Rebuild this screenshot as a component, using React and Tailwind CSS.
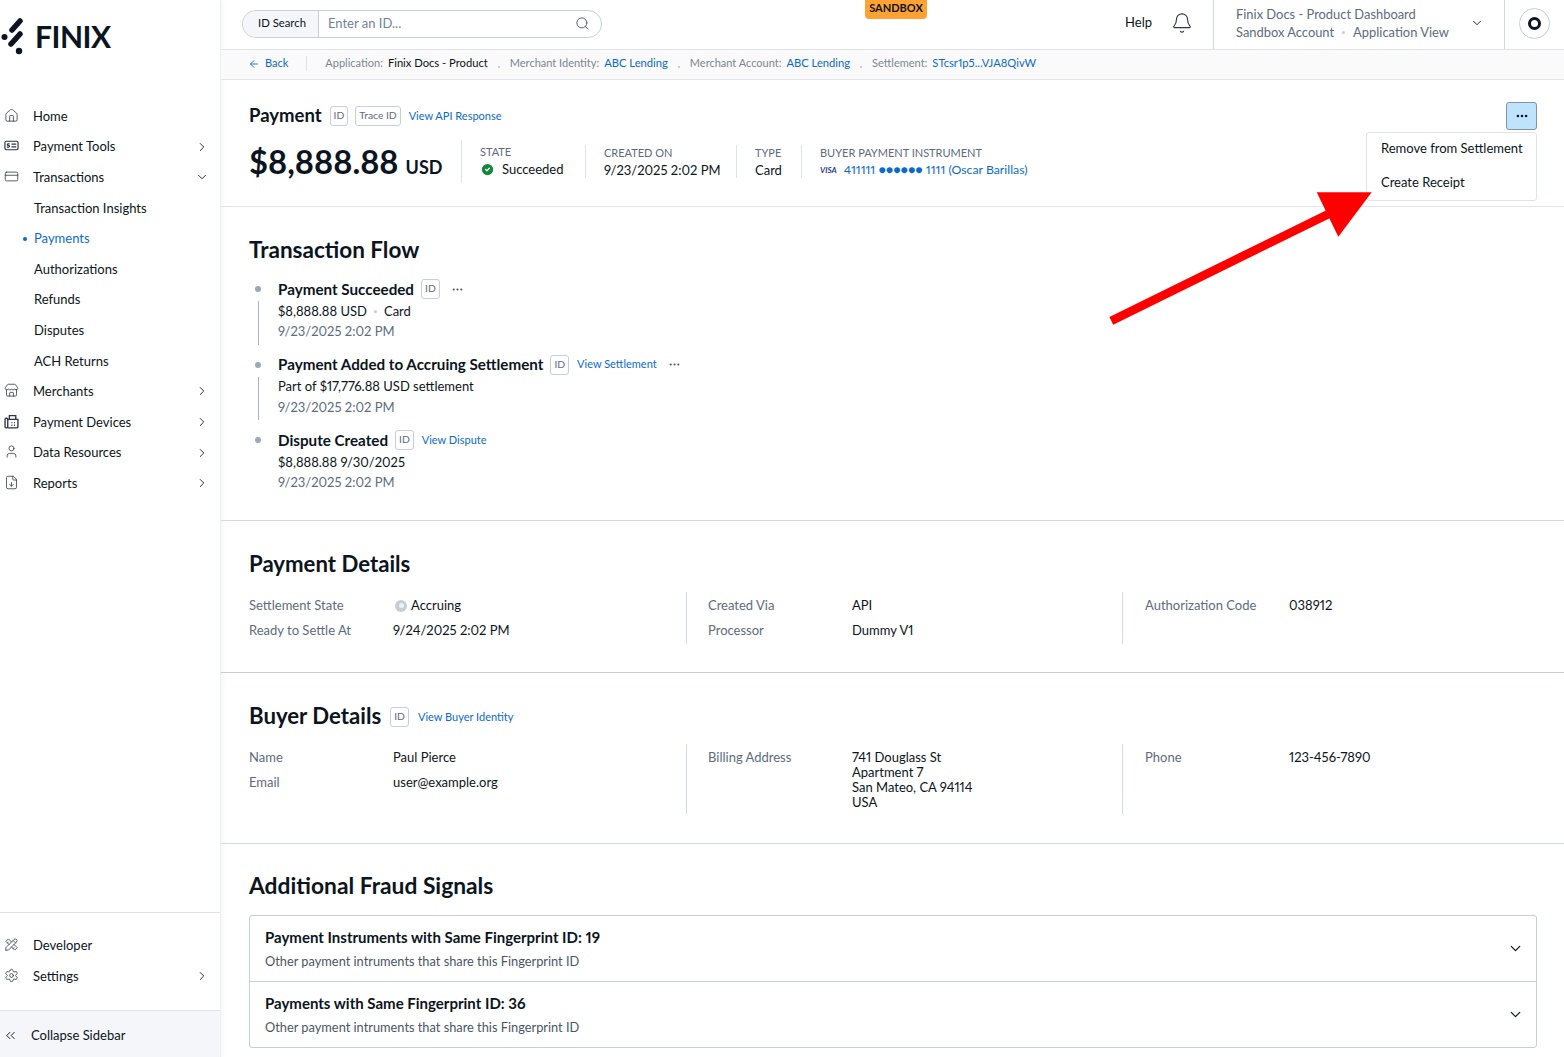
import {
  ArrowLeft,
  Bell,
  CheckCircle2,
  ChevronDown,
  ChevronRight,
  ChevronsLeft,
  CreditCard,
  Ellipsis,
  FileDown,
  House,
  Search,
  Settings,
  Store,
  User,
} from "lucide-react";
import { TbTools } from "react-icons/tb";

const link = "text-[#0b6bcb]";

function ToolsIcon(props) {
  return (
    <svg viewBox="0 0 16 12" fill="none" stroke="currentColor" strokeWidth="0.9" {...props}>
      <rect x="1" y="1.5" width="14" height="9" rx="1.5" />
      <path d="M8 4.5h5M8 7.5h5M6 4.3H4.2a.9.9 0 0 0 0 1.7h.8a.9.9 0 0 1 0 1.8H3" />
    </svg>
  );
}

function DeviceIcon(props) {
  return (
    <svg viewBox="0 0 14 14" fill="none" stroke="currentColor" strokeWidth="0.9" {...props}>
      <rect x="1" y="4" width="2.5" height="9" rx="1" />
      <path d="M3.5 5H13v7a1 1 0 0 1-1 1H3.5M5 5V1.5h6V5" />
      <path d="M7 8h.8M9.5 8h.8M7 10.5h.8M9.5 10.5h.8" />
    </svg>
  );
}

function NavItem({ icon: Icon, label, open, arrow }) {
  return (
    <div className="flex h-[30.6px] items-center pl-[4px] pr-[11px]">
      <Icon className="mb-[3px] h-[15px] w-[15px] shrink-0 text-[#2c3644]" strokeWidth={1.25} />
      <span className="ml-[14px] flex-1">{label}</span>
      {open ? (
        <ChevronDown className="mb-[1px] h-[14px] w-[14px]" strokeWidth={1.5} />
      ) : arrow ? (
        <ChevronRight className="mb-[1px] h-[14px] w-[14px]" strokeWidth={1.5} />
      ) : null}
    </div>
  );
}

function SubItem({ label, active }) {
  return (
    <div className={`relative flex h-[30.6px] items-center pl-[34px] ${active ? link : ""}`}>
      {active && <span className="absolute left-[23px] h-[4px] w-[4px] rounded-full bg-[#0b6bcb]" />}
      {label}
    </div>
  );
}

function Sidebar() {
  return (
    <aside className="flex h-full w-[221px] shrink-0 flex-col border-r border-[#eef0f3] text-[13px] text-[#0b1420] shadow-[2px_0_4px_rgba(0,0,0,0.04)]">
      <div className="flex h-[101.3px] shrink-0 items-start pl-0 pt-[17px]">
        <svg viewBox="0 0 24 40" className="h-[40px] w-[24px]" fill="none" stroke="#0b1420" strokeLinecap="round">
          <path d="M20 4 12 13" strokeWidth="5.5" />
          <path d="M20 17 11 27" strokeWidth="5.5" />
          <circle cx="4.5" cy="20" r="3" fill="#0b1420" stroke="none" />
          <circle cx="19" cy="34" r="3.2" fill="#0b1420" stroke="none" />
        </svg>
        <span className="ml-[11px] text-[30px] font-bold leading-[38px] tracking-[-0.5px] text-[#0b1420]">FINIX</span>
      </div>
      <nav>
        <NavItem icon={House} label="Home" />
        <NavItem icon={ToolsIcon} label="Payment Tools" arrow />
        <NavItem icon={CreditCard} label="Transactions" open />
        <SubItem label="Transaction Insights" />
        <SubItem label="Payments" active />
        <SubItem label="Authorizations" />
        <SubItem label="Refunds" />
        <SubItem label="Disputes" />
        <SubItem label="ACH Returns" />
        <NavItem icon={Store} label="Merchants" arrow />
        <NavItem icon={DeviceIcon} label="Payment Devices" arrow />
        <NavItem icon={User} label="Data Resources" arrow />
        <NavItem icon={FileDown} label="Reports" arrow />
      </nav>
      <div className="mt-auto border-t border-[#dfe3e8] py-[18px]">
        <NavItem icon={TbTools} label="Developer" />
        <NavItem icon={Settings} label="Settings" arrow />
      </div>
      <div className="flex h-[47px] shrink-0 items-center border-t border-[#dfe3e8] bg-[#f4f6f9] pl-[3px] pt-[3px]">
        <ChevronsLeft className="h-[15px] w-[15px]" strokeWidth={1.5} />
        <span className="ml-[13px]">Collapse Sidebar</span>
      </div>
    </aside>
  );
}

function TopBar() {
  return (
    <header className="relative flex h-[50px] shrink-0 items-center border-b border-[#e0e4ea] pl-[21px] text-[13px]">
      <div className="mb-[2px] flex h-[28px] w-[360px] overflow-hidden rounded-full border border-[#c5ced9]">
        <div className="flex w-[76px] items-center justify-center border-r border-[#c5ced9] bg-[#f4f6f9] pl-[3px] text-[11.3px] text-[#0b1420]">
          ID Search
        </div>
        <div className="flex flex-1 items-center justify-between pl-[9px] pr-[11px] text-[#73829a]">
          Enter an ID...
          <Search className="h-[15px] w-[15px] text-[#4a5666]" strokeWidth={1.5} />
        </div>
      </div>
      <div className="absolute left-[644px] top-0 flex h-[19px] w-[62px] items-center justify-center rounded-b-[4px] bg-[#ffa233] pb-[3px] text-[11px] font-bold text-[#0b1420]">
        SANDBOX
      </div>
      <span className="mb-[3px] ml-auto text-[#0b1420]">Help</span>
      <Bell className="mb-[3px] ml-[19px] h-[22px] w-[22px] text-[#2c3644]" strokeWidth={1.25} />
      <div className="ml-[20px] flex h-full w-[292px] items-center border-x border-[#d3d9e1] pb-[3px] pl-[22px] pr-[20px]">
        <div className="flex-1 text-[12.9px] leading-[18px] text-[#5d6b7e]">
          <div>Finix Docs - Product Dashboard</div>
          <div className="flex items-center">
            Sandbox Account
            <span className="mx-[8px] h-[3px] w-[3px] rounded-full bg-[#c5ced9]" />
            Application View
          </div>
        </div>
        <ChevronDown className="h-[14px] w-[14px] text-[#0b1420]" strokeWidth={1.5} />
      </div>
      <div className="mb-[2px] flex w-[59px] justify-center">
        <div className="flex h-[31px] w-[31px] items-center justify-center rounded-full border border-[#c5ced9]">
          <span className="h-[13px] w-[13px] rounded-full border-[3px] border-[#0b1420]" />
        </div>
      </div>
    </header>
  );
}

function Crumb({ label, value, blue }) {
  return (
    <span className="flex items-center gap-[5px]">
      <span className="text-[#7b8694]">{label}</span>
      <span className={`text-[11.2px] ${blue ? link : "text-[#0b1420]"}`}>{value}</span>
    </span>
  );
}

const dot = <span className="mx-[10px] mt-[7px] h-[2px] w-[2px] bg-[#c5ced9]" />;

function Breadcrumbs() {
  return (
    <div className="flex h-[30px] shrink-0 items-center border-b border-[#e0e4ea] bg-[#fafafa] pb-[2px] pl-[27px] text-[11px]">
      <span className={`flex items-center gap-[5px] ${link}`}>
        <ArrowLeft className="h-[12px] w-[12px]" strokeWidth={1.75} />
        Back
      </span>
      <span className="ml-[18px] mr-[18px] h-[15px] w-px bg-[#dfe3e8]" />
      <Crumb label="Application:" value="Finix Docs - Product" />
      {dot}
      <Crumb label="Merchant Identity:" value="ABC Lending" blue />
      {dot}
      <Crumb label="Merchant Account:" value="ABC Lending" blue />
      {dot}
      <Crumb label="Settlement:" value="STcsr1p5...VJA8QivW" blue />
    </div>
  );
}

function IdTag({ children = "ID" }) {
  return (
    <span className="flex h-[20px] items-center rounded-[3px] border border-[#c5ced9] px-[3px] text-[10.3px] text-[#5d6b7e]">
      {children}
    </span>
  );
}

function Stat({ label, children, className = "" }) {
  return (
    <div className={`h-[33px] border-l border-[#dfe3e8] pl-[18px] ${className}`}>
      <div className="text-[11px] leading-[15px] text-[#5d6b7e]">{label}</div>
      <div className="mt-[2px] flex items-center text-[13px] leading-[16px] text-[#0b1420]">{children}</div>
    </div>
  );
}

function PaymentHeader() {
  return (
    <section className="relative h-[127px] shrink-0 border-b border-[#e0e4ea] pl-[28px] pt-[25px]">
      <div className="flex h-[22px] items-center">
        <h1 className="text-[18.5px] font-bold text-[#0b1420]">Payment</h1>
        <span className="ml-[8px]"><IdTag /></span>
        <span className="ml-[7px]"><IdTag>Trace ID</IdTag></span>
        <span className={`ml-[8px] text-[11px] ${link}`}>View API Response</span>
      </div>
      <div className="mt-[13px] flex items-center">
        <div className="flex w-[212px] items-baseline text-[#0b1420]">
          <span className="text-[32.6px] font-bold leading-[40px]">$8,888.88</span>
          <span className="ml-[7px] text-[18px] font-bold">USD</span>
        </div>
        <Stat label="STATE" className="h-[43px] w-[124px] pl-[17px] pt-[4px]">
          <CheckCircle2 className="mr-[7px] h-[15px] w-[15px] fill-[#12883c] text-white" strokeWidth={2} />
          Succeeded
        </Stat>
        <Stat label="CREATED ON" className="w-[151px]">9/23/2025 2:02 PM</Stat>
        <Stat label="TYPE" className="w-[65px]">Card</Stat>
        <Stat label="BUYER PAYMENT INSTRUMENT">
          <span className="mr-[7px] text-[8px] font-bold italic text-[#2a3f8f]">VISA</span>
          <span className={`text-[12.3px] ${link}`}>411111 ●●●●●● 1111 (Oscar Barillas)</span>
        </Stat>
      </div>
      <button className="absolute right-[27px] top-[22px] flex h-[28px] w-[31px] items-center justify-center rounded-[3px] border border-[#7f93ab] bg-[#bfe3fb]">
        <Ellipsis className="h-[14px] w-[14px] text-[#0b1420]" strokeWidth={2.5} />
      </button>
    </section>
  );
}

function FlowItem({ title, children, date, last, tail }) {
  return (
    <div className="relative h-[75.5px] pl-[29px]">
      <span className="absolute left-[6px] top-[7px] h-[6px] w-[6px] rounded-full bg-[#9aa8b8]" />
      {!last && <span className="absolute bottom-[10px] left-[8.5px] top-[22px] w-px bg-[#a9b4c1]" />}
      <div className="flex h-[20px] items-center">
        <span className="text-[15.2px] font-bold text-[#0b1420]">{title}</span>
        <span className="ml-[7px]"><IdTag /></span>
        {tail}
      </div>
      <div className="mt-[4px] flex h-[17px] items-center text-[13px] text-[#0b1420]">{children}</div>
      <div className="mt-[3px] h-[17px] text-[13px] leading-[17px] text-[#5d6b7e]">{date}</div>
    </div>
  );
}

function TransactionFlow() {
  const more = <Ellipsis className="ml-[11px] h-[13px] w-[13px] text-[#4a5666]" strokeWidth={2} />;
  return (
    <section className="h-[314px] shrink-0 border-b border-[#d3d9e1] pl-[28px] pt-[29px]">
      <h2 className="text-[22.5px] font-bold leading-[27px] text-[#0b1420]">Transaction Flow</h2>
      <div className="mt-[16px]">
        <FlowItem title="Payment Succeeded" date="9/23/2025 2:02 PM" tail={more}>
          $8,888.88 USD
          <span className="mx-[7px] h-[3px] w-[3px] rounded-full bg-[#c5ced9]" />
          Card
        </FlowItem>
        <FlowItem
          title="Payment Added to Accruing Settlement"
          date="9/23/2025 2:02 PM"
          tail={
            <>
              <span className={`ml-[8px] text-[11px] ${link}`}>View Settlement</span>
              {more}
            </>
          }
        >
          Part of $17,776.88 USD settlement
        </FlowItem>
        <FlowItem
          title="Dispute Created"
          date="9/23/2025 2:02 PM"
          last
          tail={<span className={`ml-[8px] text-[11px] ${link}`}>View Dispute</span>}
        >
          $8,888.88 9/30/2025
        </FlowItem>
      </div>
    </section>
  );
}

function Field({ label, children }) {
  return (
    <div className="grid min-h-[25px] grid-cols-[144px_1fr] text-[13px] leading-[15px]">
      <span className="text-[#5d6b7e]">{label}</span>
      <div className="text-[#0b1420]">{children}</div>
    </div>
  );
}

function Columns({ children, className = "" }) {
  return <div className={`mt-[15px] grid grid-cols-[437px_436px_1fr] ${className}`}>{children}</div>;
}

function Column({ first, wide, children }) {
  return (
    <div className={`h-full pt-[6px] ${first ? "" : "border-l border-[#cfdcea]"} ${wide ? "pl-[22px]" : ""} ${!first && !wide ? "pl-[21px]" : ""}`}>
      {children}
    </div>
  );
}

function PaymentDetails() {
  return (
    <section className="h-[152px] shrink-0 border-b border-[#c5ced9] pl-[28px] pt-[29px]">
      <h2 className="text-[22.2px] font-bold leading-[27px] text-[#0b1420]">Payment Details</h2>
      <Columns className="grid-rows-[52px]">
        <Column first>
          <Field label="Settlement State">
            <span className="flex items-center">
              <span className="mr-[4px] ml-[2px] flex h-[12px] w-[12px] items-center justify-center rounded-full bg-[#c5ced3]">
                <span className="h-[5px] w-[5px] rounded-full bg-[#eef1f3]" />
              </span>
              Accruing
            </span>
          </Field>
          <Field label="Ready to Settle At">9/24/2025 2:02 PM</Field>
        </Column>
        <Column>
          <Field label="Created Via">API</Field>
          <Field label="Processor">Dummy V1</Field>
        </Column>
        <Column wide>
          <Field label="Authorization Code">038912</Field>
        </Column>
      </Columns>
    </section>
  );
}

function BuyerDetails() {
  return (
    <section className="h-[171px] shrink-0 border-b border-[#d3d9e1] pl-[28px] pt-[29px]">
      <div className="flex items-center">
        <h2 className="text-[22.2px] font-bold leading-[27px] text-[#0b1420]">Buyer Details</h2>
        <span className="ml-[9px] mt-[3px]"><IdTag /></span>
        <span className={`ml-[9px] mt-[3px] text-[11px] ${link}`}>View Buyer Identity</span>
      </div>
      <Columns className="grid-rows-[70px]">
        <Column first>
          <Field label="Name">Paul Pierce</Field>
          <Field label="Email">user@example.org</Field>
        </Column>
        <Column>
          <Field label="Billing Address">
            741 Douglass St
            <br />
            Apartment 7
            <br />
            San Mateo, CA 94114
            <br />
            USA
          </Field>
        </Column>
        <Column wide>
          <Field label="Phone">123-456-7890</Field>
        </Column>
      </Columns>
    </section>
  );
}

function FraudRow({ title, border }) {
  return (
    <div className={`flex items-center justify-between pl-[15px] pr-[12px] ${border ? "h-[66px] border-t border-[#c5ced9]" : "h-[65px]"}`}>
      <div>
        <div className="text-[15px] font-bold leading-[18px] text-[#0b1420]">{title}</div>
        <div className="mt-[7px] text-[12.8px] leading-[17px] text-[#4a5666]">
          Other payment intruments that share this Fingerprint ID
        </div>
      </div>
      <ChevronDown className="h-[17px] w-[17px] text-[#0b1420]" strokeWidth={1.75} />
    </div>
  );
}

function FraudSignals() {
  return (
    <section className="pl-[28px] pr-[27px] pt-[28px]">
      <h2 className="text-[22.8px] font-bold leading-[27px] text-[#0b1420]">Additional Fraud Signals</h2>
      <div className="mt-[16px] rounded-[3px] border border-[#c5ced9]">
        <FraudRow title="Payment Instruments with Same Fingerprint ID: 19" />
        <FraudRow title="Payments with Same Fingerprint ID: 36" border />
      </div>
    </section>
  );
}

export default function App() {
  return (
    <div className="relative flex h-[1057px] overflow-hidden bg-white font-['Lato',sans-serif] proportional-nums">
      <Sidebar />
      <main className="flex min-w-0 flex-1 flex-col">
        <TopBar />
        <Breadcrumbs />
        <PaymentHeader />
        <TransactionFlow />
        <PaymentDetails />
        <BuyerDetails />
        <FraudSignals />
      </main>
      <div className="absolute left-[1366px] top-[132px] h-[69px] w-[171px] rounded-[3px] border border-[#e0e4ea] bg-white pl-[14px] pt-[6px] text-[13px] text-[#0b1420]">
        <div className="h-[34px] leading-[18px]">Remove from Settlement</div>
        <div className="h-[26px] leading-[18px]">Create Receipt</div>
      </div>
      <svg className="pointer-events-none absolute left-[1105px] top-[188px] h-[140px] w-[272px]" viewBox="0 0 272 140">
        <path d="M6.3 132.8 236 19.8" stroke="#fe0000" strokeWidth="8.6" />
        <path d="M211.7 4.3h55L233.3 48.7z" fill="#fe0000" />
      </svg>
    </div>
  );
}
